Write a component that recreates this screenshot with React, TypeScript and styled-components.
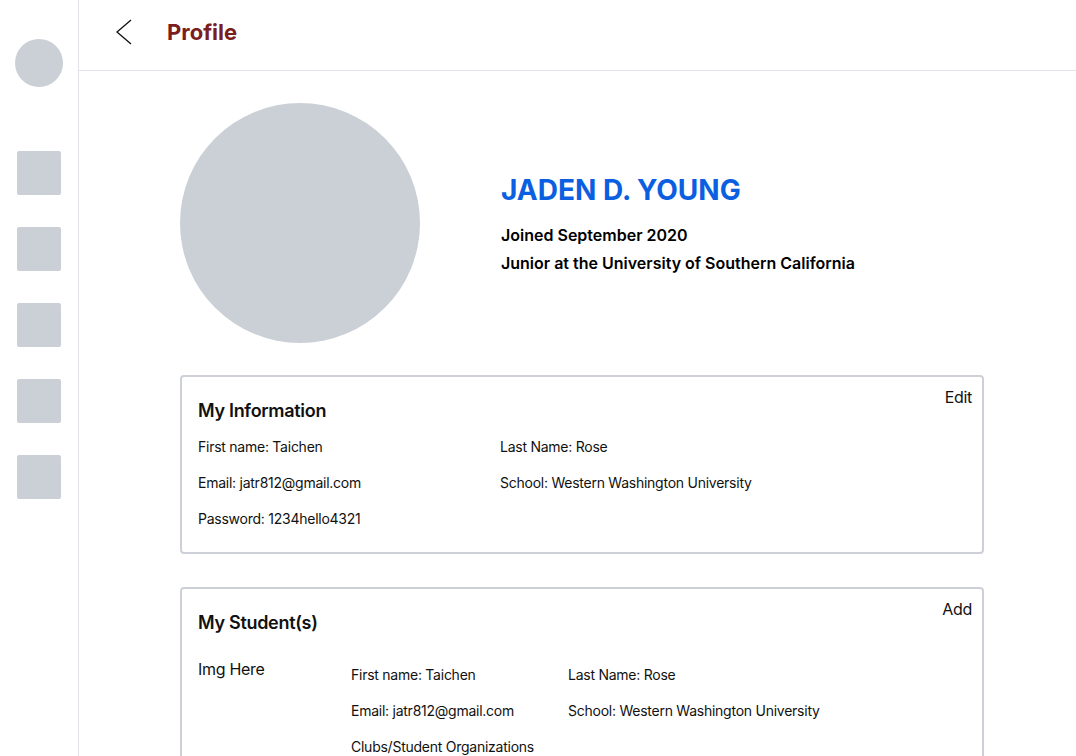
import React from 'react';
import styled, { createGlobalStyle } from 'styled-components';

const GlobalStyle = createGlobalStyle`
  body {
    margin: 0;
    background: #fff;
    font-family: Inter, 'Noto Sans', Arial, sans-serif;
    color: #111;
  }
`;

const Layout = styled.div`
  display: flex;
  min-height: 756px;
`;

const Sidebar = styled.nav`
  width: 78px;
  flex-shrink: 0;
  border-right: 1px solid #e3e3ea;
  display: flex;
  flex-direction: column;
  align-items: center;
  padding-top: 39px;
`;

const SideAvatar = styled.div`
  width: 48px;
  height: 48px;
  border-radius: 50%;
  background: #cbd0d7;
  margin-bottom: 64px;
`;

const SideItem = styled.div`
  width: 44px;
  height: 44px;
  border-radius: 2px;
  background: #cbd0d7;
  margin-bottom: 32px;
`;

const Main = styled.main`
  flex: 1;
  display: flex;
  flex-direction: column;
`;

const TopBar = styled.header`
  height: 70px;
  border-bottom: 1px solid #e3e3ea;
  display: flex;
  align-items: center;
  padding-left: 36px;
  gap: 34px;
`;

const BackButton = styled.button`
  border: 0;
  background: none;
  padding: 0;
  display: flex;
  cursor: pointer;
  margin-top: -6px;
`;

const PageTitle = styled.h1`
  margin: -6px 0 0;
  font-size: 22px;
  font-weight: 700;
  color: #7b1e1e;
`;

const Content = styled.div`
  padding: 32px 0 0 101px;
  display: flex;
  flex-direction: column;
  width: 804px;
`;

const Hero = styled.section`
  display: flex;
  align-items: center;
  gap: 81px;
  margin-bottom: 32px;
`;

const BigAvatar = styled.div`
  width: 240px;
  height: 240px;
  border-radius: 50%;
  background: #cbd0d7;
  flex-shrink: 0;
`;

const HeroText = styled.div`
  display: flex;
  flex-direction: column;
  margin-top: 4px;
`;

const Name = styled.h2`
  margin: 0 0 14px;
  font-size: 28px;
  line-height: 34px;
  font-weight: 700;
  color: #0a60e0;
`;

const Meta = styled.div`
  font-size: 16px;
  line-height: 28px;
  font-weight: 600;
  color: #000;
`;

const Card = styled.section`
  border: 2px solid #cdd0d6;
  border-radius: 4px;
  padding: 10px 10px 23px 16px;
  margin-bottom: 33px;
`;

const CardHeader = styled.div`
  display: flex;
  justify-content: space-between;
  align-items: flex-start;
`;

const CardTitle = styled.h3`
  margin: 13px 0 0;
  font-size: 18px;
  line-height: 22px;
  font-weight: 600;
  letter-spacing: -0.3px;
`;

const CardAction = styled.button`
  border: 0;
  background: none;
  padding: 0;
  font: inherit;
  font-size: 16px;
  line-height: 20px;
  letter-spacing: -0.3px;
  color: #111;
  cursor: pointer;
`;

const InfoGrid = styled.div<{ cols: string; top: number }>`
  display: grid;
  grid-template-columns: ${(p) => p.cols};
  row-gap: 16px;
  margin-top: ${(p) => p.top}px;
  font-size: 14px;
  line-height: 20px;
  letter-spacing: -0.25px;
`;

const StudentRow = styled.div`
  display: flex;
  margin-top: 25px;
`;

const ImgSlot = styled.div`
  width: 153px;
  flex-shrink: 0;
  font-size: 16px;
  line-height: 20px;
  letter-spacing: -0.3px;
`;

const StudentInfo = styled.div`
  padding-top: 6px;
  flex: 1;
`;

const Chevron = () => (
  <svg width="18" height="26" viewBox="0 0 18 26" fill="none">
    <path d="M16 1 L2 13 L16 25" stroke="#111" strokeWidth="1.3" />
  </svg>
);

export default function App() {
  return (
    <Layout>
      <GlobalStyle />
      <Sidebar>
        <SideAvatar />
        {[0, 1, 2, 3, 4].map((i) => (
          <SideItem key={i} />
        ))}
      </Sidebar>
      <Main>
        <TopBar>
          <BackButton aria-label="Back">
            <Chevron />
          </BackButton>
          <PageTitle>Profile</PageTitle>
        </TopBar>
        <Content>
          <Hero>
            <BigAvatar />
            <HeroText>
              <Name>JADEN D. YOUNG</Name>
              <Meta>Joined September 2020</Meta>
              <Meta>Junior at the University of Southern California</Meta>
            </HeroText>
          </Hero>

          <Card>
            <CardHeader>
              <CardTitle>My Information</CardTitle>
              <CardAction>Edit</CardAction>
            </CardHeader>
            <InfoGrid cols="302px 1fr" top={15}>
              <div>First name: Taichen</div>
              <div>Last Name: Rose</div>
              <div>Email: jatr812@gmail.com</div>
              <div>School: Western Washington University</div>
              <div>Password: 1234hello4321</div>
            </InfoGrid>
          </Card>

          <Card>
            <CardHeader>
              <CardTitle>My Student(s)</CardTitle>
              <CardAction>Add</CardAction>
            </CardHeader>
            <StudentRow>
              <ImgSlot>Img Here</ImgSlot>
              <StudentInfo>
                <InfoGrid cols="217px 1fr" top={0}>
                  <div>First name: Taichen</div>
                  <div>Last Name: Rose</div>
                  <div>Email: jatr812@gmail.com</div>
                  <div>School: Western Washington University</div>
                  <div>Clubs/Student Organizations</div>
                </InfoGrid>
              </StudentInfo>
            </StudentRow>
          </Card>
        </Content>
      </Main>
    </Layout>
  );
}
